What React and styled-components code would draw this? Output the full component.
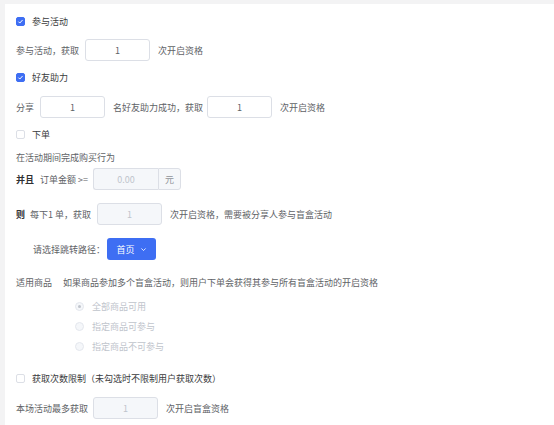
import React, { useState } from 'react';
import styled, { createGlobalStyle } from 'styled-components';

const GlobalStyle = createGlobalStyle`
  html, body {
    margin: 0;
    padding: 0;
    background: #f3f3f4;
  }
  body {
    font-family: 'Noto Sans CJK SC', 'Noto Sans', sans-serif;
    font-size: 9px;
    color: #606266;
  }
  * {
    box-sizing: border-box;
  }
`;

const Page = styled.div`
  padding: 4px 0 0 5px;
  height: 425px;
  overflow: hidden;
`;

const Card = styled.div`
  background: #fff;
  height: 100%;
  padding: 10px 11px 0;
  display: flex;
  flex-direction: column;
`;

const Row = styled.div`
  display: flex;
  align-items: center;
  height: ${(p) => p.h || 22}px;
  margin-top: ${(p) => p.mt || 0}px;
  padding-left: ${(p) => p.indent || 0}px;
  white-space: nowrap;
`;

const Text = styled.span`
  color: ${(p) => (p.dark ? '#303133' : '#606266')};
  font-weight: ${(p) => (p.bold ? 700 : 400)};
  margin-right: ${(p) => p.mr ?? 6}px;
`;

const CheckLabel = styled.label`
  display: flex;
  align-items: center;
  gap: 7px;
  color: #3a3b3d;
  cursor: pointer;
`;

const Box = styled.span`
  width: 9px;
  height: 9px;
  border-radius: 2px;
  border: 1px solid ${(p) => (p.checked ? '#3e6ef3' : '#dcdfe6')};
  background: ${(p) => (p.checked ? '#3e6ef3' : '#fff')};
  display: flex;
  align-items: center;
  justify-content: center;
`;

const Input = styled.input`
  width: ${(p) => p.w || 65}px;
  height: 22px;
  border: 1px solid #dcdfe6;
  border-radius: ${(p) => (p.addon ? '3px 0 0 3px' : '3px')};
  background: ${(p) => (p.disabled ? '#f5f7fa' : '#fff')};
  color: ${(p) => (p.disabled ? '#c0c4cc' : '#606266')};
  font-family: inherit;
  font-size: 9px;
  text-align: center;
  outline: none;
  padding: 0;
  margin-right: 8px;
  ${(p) => p.addon && 'margin-right: 0; border-right: none;'}
`;

const Addon = styled.span`
  width: 23px;
  height: 22px;
  border: 1px solid #dcdfe6;
  border-radius: 0 3px 3px 0;
  background: #f5f7fa;
  color: #909399;
  display: flex;
  align-items: center;
  justify-content: center;
`;

const SelectButton = styled.button`
  width: 49px;
  height: 22px;
  background: #3e6ef3;
  border: none;
  border-radius: 3px;
  color: #fff;
  font-family: inherit;
  font-size: 9px;
  display: flex;
  align-items: center;
  justify-content: center;
  gap: 5px;
  padding: 0;
  cursor: pointer;
`;

const RadioList = styled.div`
  display: flex;
  flex-direction: column;
  gap: 6px;
  padding-left: 59px;
  margin-top: 10px;
`;

const RadioItem = styled.label`
  display: flex;
  align-items: center;
  gap: 8px;
  height: 14px;
  color: #c0c4cc;
`;

const RadioDot = styled.span`
  width: 9px;
  height: 9px;
  border-radius: 50%;
  border: 1px solid #e4e7ed;
  background: #f5f7fa;
  display: flex;
  align-items: center;
  justify-content: center;
  &::after {
    content: '';
    width: 3px;
    height: 3px;
    border-radius: 50%;
    background: ${(p) => (p.checked ? '#c0c4cc' : 'transparent')};
  }
`;

const Check = ({ checked, onToggle, children }) => (
  <CheckLabel onClick={onToggle}>
    <Box checked={checked}>
      {checked && (
        <svg width="7" height="7" viewBox="0 0 10 10">
          <path d="M2 5.2l2 2 4-4.4" fill="none" stroke="#fff" strokeWidth="1.4" />
        </svg>
      )}
    </Box>
    {children}
  </CheckLabel>
);

export default function App() {
  const [checks, setChecks] = useState({ join: true, friend: true, order: false, limit: false });
  const toggle = (k) => () => setChecks({ ...checks, [k]: !checks[k] });

  return (
    <Page>
      <GlobalStyle />
      <Card>
        <Row h={14}>
          <Check checked={checks.join} onToggle={toggle('join')}>参与活动</Check>
        </Row>
        <Row mt={11}>
          <Text>参与活动，获取</Text>
          <Input defaultValue="1" />
          <Text>次开启资格</Text>
        </Row>
        <Row h={14} mt={9}>
          <Check checked={checks.friend} onToggle={toggle('friend')}>好友助力</Check>
        </Row>
        <Row mt={12}>
          <Text>分享</Text>
          <Input defaultValue="1" />
          <Text mr={4}>名好友助力成功，获取</Text>
          <Input defaultValue="1" />
          <Text>次开启资格</Text>
        </Row>
        <Row h={14} mt={9}>
          <Check checked={checks.order} onToggle={toggle('order')}>下单</Check>
        </Row>
        <Row h={14} mt={9}>
          <Text>在活动期间完成购买行为</Text>
        </Row>
        <Row mt={4}>
          <Text bold dark>并且</Text>
          <Text mr={5}>订单金额 &gt;=</Text>
          <Input disabled addon defaultValue="0.00" />
          <Addon>元</Addon>
        </Row>
        <Row mt={13}>
          <Text bold dark mr={5}>则</Text>
          <Text mr={6}>每下1 单，获取</Text>
          <Input disabled defaultValue="1" />
          <Text>次开启资格，需要被分享人参与盲盒活动</Text>
        </Row>
        <Row mt={13} indent={17}>
          <Text mr={2}>请选择跳转路径：</Text>
          <SelectButton>
            首页
            <svg width="7" height="7" viewBox="0 0 10 10">
              <path d="M2 3.5l3 3 3-3" fill="none" stroke="#fff" strokeWidth="1.2" />
            </svg>
          </SelectButton>
        </Row>
        <Row h={14} mt={15}>
          <Text mr={11}>适用商品</Text>
          <Text>如果商品参加多个盲盒活动，则用户下单会获得其参与所有盲盒活动的开启资格</Text>
        </Row>
        <RadioList>
          <RadioItem>
            <RadioDot checked />
            全部商品可用
          </RadioItem>
          <RadioItem>
            <RadioDot />
            指定商品可参与
          </RadioItem>
          <RadioItem>
            <RadioDot />
            指定商品不可参与
          </RadioItem>
        </RadioList>
        <Row h={14} mt={18}>
          <Check checked={checks.limit} onToggle={toggle('limit')}>获取次数限制（未勾选时不限制用户获取次数）</Check>
        </Row>
        <Row mt={12}>
          <Text mr={5}>本场活动最多获取</Text>
          <Input disabled defaultValue="1" />
          <Text>次开启盲盒资格</Text>
        </Row>
      </Card>
    </Page>
  );
}
